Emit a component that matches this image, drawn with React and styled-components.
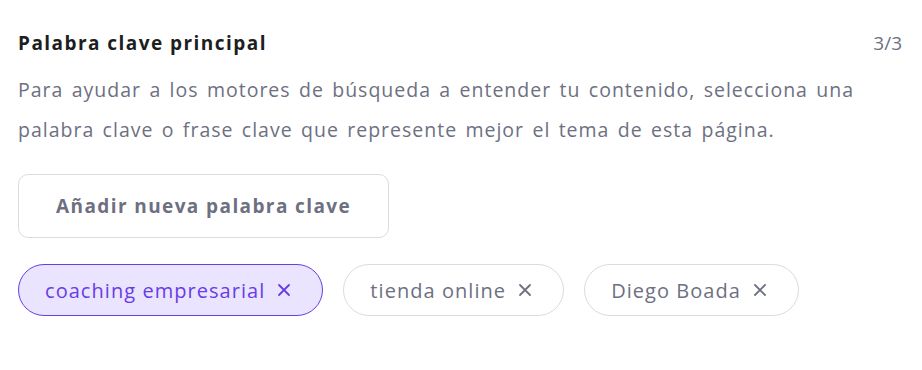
import React from 'react';
import styled, { createGlobalStyle } from 'styled-components';

const GlobalStyle = createGlobalStyle`
    body {
        margin: 0;
        background: #ffffff;
        font-family: "Open Sans", "Liberation Sans", sans-serif;
    }
`;

const Container = styled.section`
    padding: 28px 20px 0 18px;
`;

const Header = styled.div`
    display: flex;
    justify-content: space-between;
    align-items: center;
    height: 30px;
`;

const Title = styled.h2`
    margin: 0;
    font-size: 19px;
    font-weight: 700;
    letter-spacing: 1.45px;
    color: #1d1e20;
`;

const Counter = styled.span`
    font-size: 19px;
    color: #6d7081;
`;

const Description = styled.p`
    margin: 12px 0 0;
    font-size: 19.5px;
    line-height: 40px;
    letter-spacing: 1px;
    word-spacing: 2.3px;
    color: #6d7081;
    max-width: 870px;
`;

const AddButton = styled.button`
    margin-top: 24px;
    height: 64px;
    padding: 0 37px;
    border: 1px solid #dadce0;
    border-radius: 10px;
    background: #ffffff;
    font-family: inherit;
    font-size: 19px;
    font-weight: 700;
    letter-spacing: 1.4px;
    color: #6d7081;
`;

const Chips = styled.div`
    display: flex;
    gap: 20px;
    margin-top: 26px;
`;

const Chip = styled.div`
    display: flex;
    align-items: center;
    gap: 12px;
    height: 52px;
    padding: 0 31px 0 26px;
    border-radius: 26px;
    box-sizing: border-box;
    border: 1px solid ${p => (p.active ? '#673de6' : '#dadce0')};
    background: ${p => (p.active ? '#ebe4ff' : '#ffffff')};
    color: ${p => (p.active ? '#673de6' : '#6d7081')};
    font-size: 20px;
    letter-spacing: 1.05px;
`;

const Close = styled.svg`
    width: 14px;
    height: 14px;
`;

function CloseIcon() {
    return (
        <Close viewBox="0 0 14 14" fill="none" stroke="currentColor" strokeWidth="1.8" strokeLinecap="round">
            <path d="M2 2l10 10M12 2L2 12" />
        </Close>
    );
}

const keywords = [
    { label: 'coaching empresarial', active: true },
    { label: 'tienda online' },
    { label: 'Diego Boada' },
];

export default function App() {
    return (
        <>
            <GlobalStyle />
            <Container>
                <Header>
                    <Title>Palabra clave principal</Title>
                    <Counter>3/3</Counter>
                </Header>
                <Description>
                    Para ayudar a los motores de búsqueda a entender tu contenido, selecciona una palabra clave o frase clave que represente mejor el tema de esta página.
                </Description>
                <AddButton>Añadir nueva palabra clave</AddButton>
                <Chips>
                    {keywords.map(k => (
                        <Chip key={k.label} active={k.active}>
                            {k.label}
                            <CloseIcon />
                        </Chip>
                    ))}
                </Chips>
            </Container>
        </>
    );
}
